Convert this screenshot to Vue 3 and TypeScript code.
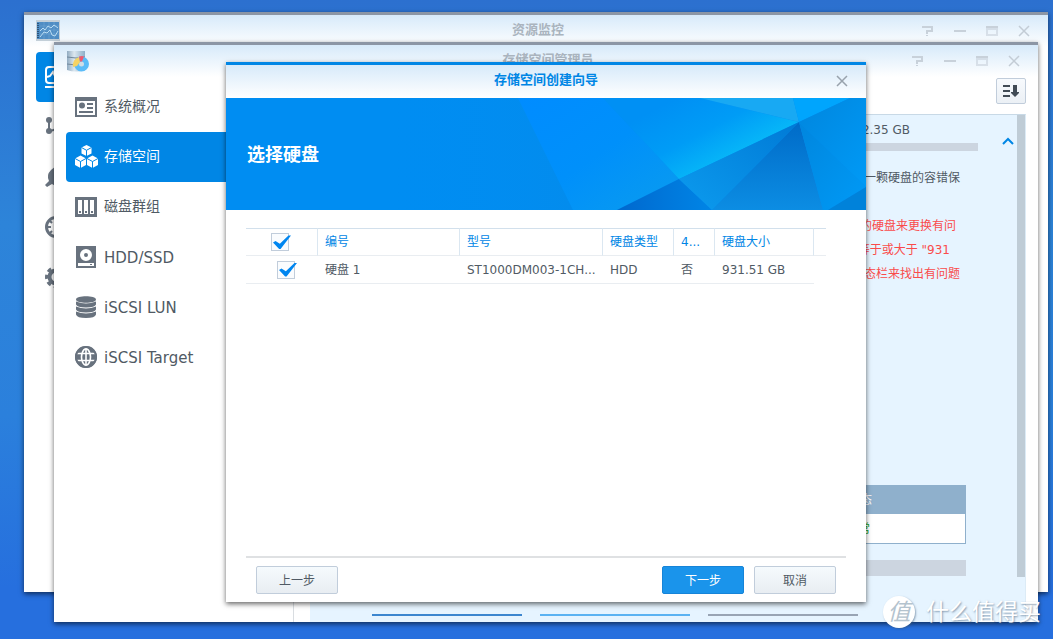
<script setup lang="ts">
import { ref, computed } from 'vue'

interface NavItem {
  icon: string
  label: string
  latin?: boolean
}

interface Disk {
  name: string
  model: string
  type: string
  native: string
  size: string
  checked: boolean
}

const monitorNav: string[] = ['chart', 'nodes', 'plug', 'clock', 'gear']
const monitorLabels: string[] = ['性能', '连接', '服务', '速度', '设置']

const storageNav: NavItem[] = [
  { icon: 'overview', label: '系统概况' },
  { icon: 'cubes', label: '存储空间' },
  { icon: 'group', label: '磁盘群组' },
  { icon: 'hdd', label: 'HDD/SSD', latin: true },
  { icon: 'lun', label: 'iSCSI LUN', latin: true },
  { icon: 'globe', label: 'iSCSI Target', latin: true },
]
const active = ref('存储空间')

const disks = ref<Disk[]>([
  { name: '硬盘 1', model: 'ST1000DM003-1CH...', type: 'HDD', native: '否', size: '931.51 GB', checked: true },
])

const allChecked = computed<boolean>({
  get: () => disks.value.every((d) => d.checked),
  set: (v) => disks.value.forEach((d) => (d.checked = v)),
})
</script>

<template>
  <div class="desktop">
    <section class="window monitor" aria-label="资源监控">
      <header class="titlebar">
        <svg class="app-icon" viewBox="0 0 24 24" aria-hidden="true">
          <rect x="0" y="0" width="24" height="21" fill="#c3cfd8" />
          <rect x="1" y="2" width="22" height="17" fill="#4f8dc4" />
          <path d="M2 3v15" stroke="#2d557c" stroke-width="2" stroke-dasharray="1 1" />
          <path d="M4 6h19M4 10h19M4 14h19M8 2v17M13 2v17M18 2v17" stroke="#75a9d5" stroke-width="0.5" />
          <path d="M4 11l3-3 2 2 3-4 3 2 3-3 4 3M4 17l4-5 3 1 3-3 2 5 3 1 3-5" fill="none" stroke="#b9dcf2" />
        </svg>
        <h2>资源监控</h2>
        <div class="controls">
          <button type="button" aria-label="帮助"><svg viewBox="0 0 12 12"><path d="M0 1h11v6H6v2H4V5h5V3H0zM4 10h2v1H4z" /></svg></button>
          <button type="button" aria-label="最小化"><svg viewBox="0 0 12 12"><path d="M0 5h12v2H0z" /></svg></button>
          <button type="button" aria-label="最大化"><svg viewBox="0 0 12 12"><path d="M0 1h12v10H0zM2 5v4h8V5z" opacity="0.6" /><path d="M0 1h12v2H0z" /></svg></button>
          <button type="button" aria-label="关闭"><svg viewBox="0 0 12 12"><path class="cross" d="M1 1l10 10M11 1L1 11" /></svg></button>
        </div>
      </header>
      <nav class="sidebar">
        <button v-for="(icon, i) in monitorNav" :key="icon" type="button" class="nav-item" :class="{ active: i === 0 }" :aria-label="monitorLabels[i]">
          <svg class="nav-icon" viewBox="0 0 22 22" fill="currentColor" aria-hidden="true">
            <template v-if="icon === 'chart'">
              <rect x="1" y="1" width="20" height="16" rx="3" fill="none" stroke="currentColor" stroke-width="2" />
              <path d="M2 11l3-1 3-4 3 6 4-5 5 3" fill="none" stroke="currentColor" stroke-width="2" />
              <path d="M0 20h22v2H0z" />
            </template>
            <template v-else-if="icon === 'nodes'">
              <circle cx="4" cy="4" r="3" /><circle cx="4" cy="15" r="3" /><circle cx="18" cy="8" r="3" />
              <path d="M4 4v11M4 15q8-1 14-7" fill="none" stroke="currentColor" stroke-width="2" />
            </template>
            <template v-else-if="icon === 'plug'">
              <path d="M0 19l4-4Q1 9 6 4l5-4 10 12-3 6q-6 4-11 0l-5 3z" />
            </template>
            <template v-else-if="icon === 'clock'">
              <circle cx="11" cy="11" r="9.500" fill="#fff" stroke="currentColor" stroke-width="3" />
              <path d="M3 11h3M5 5l2 2M11 3v3M5 17l2-2M11 11l5-5" stroke="currentColor" stroke-width="2" />
            </template>
            <template v-else>
              <circle cx="11" cy="11" r="6.500" fill="none" stroke="currentColor" stroke-width="4" />
              <circle cx="11" cy="11" r="9" fill="none" stroke="currentColor" stroke-width="4" stroke-dasharray="4 3.070" stroke-dashoffset="2" />
            </template>
          </svg>
        </button>
      </nav>
    </section>

    <section class="window storage" aria-label="存储空间管理员">
      <header class="titlebar">
        <svg class="app-icon" viewBox="0 0 24 24" aria-hidden="true">
          <defs>
            <linearGradient id="drum" x1="0" x2="1" y1="0" y2="0">
              <stop offset="0" stop-color="#91abc1" /><stop offset="0.4" stop-color="#dce7ef" /><stop offset="1" stop-color="#8dafc9" />
            </linearGradient>
          </defs>
          <path d="M1 1h18v19q-9 3-18 0z" fill="url(#drum)" />
          <path d="M1 7q9 2 18 0M1 14q9 2 18 0" fill="none" stroke="#71889c" />
          <circle cx="15.500" cy="14" r="5" fill="#cfdde6" stroke="#5bbcf8" stroke-width="5" />
          <path d="M7 17a8.500 8.500 0 0 1 6-10l1 5-3 4z" fill="#f5d364" />
          <path d="M13 6.500q3-1 5 0l-2 5h-2z" fill="#ee5a70" />
        </svg>
        <h2>存储空间管理员</h2>
        <div class="controls">
          <button type="button" aria-label="帮助"><svg viewBox="0 0 12 12"><path d="M0 1h11v6H6v2H4V5h5V3H0zM4 10h2v1H4z" /></svg></button>
          <button type="button" aria-label="最小化"><svg viewBox="0 0 12 12"><path d="M0 5h12v2H0z" /></svg></button>
          <button type="button" aria-label="最大化"><svg viewBox="0 0 12 12"><path d="M0 1h12v10H0zM2 5v4h8V5z" opacity="0.6" /><path d="M0 1h12v2H0z" /></svg></button>
          <button type="button" aria-label="关闭"><svg viewBox="0 0 12 12"><path class="cross" d="M1 1l10 10M11 1L1 11" /></svg></button>
        </div>
      </header>

      <div class="body">
        <nav class="sidebar ruled">
          <button v-for="item in storageNav" :key="item.label" type="button" class="nav-item" :class="{ active: item.label === active, latin: item.latin }" @click="active = item.label">
            <svg class="nav-icon" viewBox="0 0 22 22" fill="currentColor" fill-rule="evenodd" aria-hidden="true">
              <path v-if="item.icon === 'overview'" d="M0 1h22v20H0zM2 5v14h18V5zM7 6.500a3 3 0 1 1 0 6 3 3 0 0 1 0-6zM12 7h6v2h-6zM12 11h6v2h-6zM4 15h14v2H4z" />
              <template v-else-if="item.icon === 'cubes'">
                <path d="M11.500-1l5 2.500v6l-5 2.500-5-2.500v-6zM5.500 9.500l5.500 3v6.500l-5.500 3-5.500-3v-6.500zM17.500 9.500l5.500 3v6.500l-5.500 3-5.500-3v-6.500z" />
                <path d="M6.500 1.500l5 2.800 5-2.800M11.500 4.300V10M0 12.500l5.500 3 5.500-3M5.500 15.500V22M12 12.500l5.500 3 5.500-3M17.500 15.500V22" fill="none" stroke="#0086e5" />
              </template>
              <path v-else-if="item.icon === 'group'" d="M0 1h22v20H0zM3 4v14h4V4zM9 4v14h4V4zM15 4v14h4V4zM4 15h2v2H4zM10 15h2v2h-2zM16 15h2v2h-2z" />
              <path v-else-if="item.icon === 'hdd'" d="M1 0h20v22H1zM11 3a6 6 0 1 0 0 12 6 6 0 0 0 0-12zM11 7a2 2 0 1 1 0 4 2 2 0 0 1 0-4zM3 17v3h16v-3zM15 18h2v1h-2z" />
              <path v-else-if="item.icon === 'lun'" d="M1 3.500C1-.8 21-.8 21 3.500S1 7.800 1 3.500zM1 5.500q10 4 20 0v3q-1 3-10 3t-10-3zM1 10.500q10 4 20 0v3q-1 3-10 3t-10-3zM1 15.500q10 4 20 0v3q-1 3.500-10 3.500t-10-3.500z" />
              <template v-else>
                <circle cx="11" cy="11" r="11" />
                <path d="M2 7.500h18M2 14.500h18M11 2v18M11 2c-6 4-6 14 0 18M11 2c6 4 6 14 0 18" fill="none" stroke="#fff" stroke-width="1.600" />
                <circle cx="11" cy="11" r="10" fill="none" stroke="currentColor" stroke-width="2" />
              </template>
            </svg>
            <span>{{ item.label }}</span>
          </button>
        </nav>

        <main class="main">
          <button type="button" class="sort" aria-label="排序">
            <svg viewBox="0 0 18 14" aria-hidden="true"><path d="M1 1h7v2H1zM1 6h7v2H1zM1 11h7v2H1zM11 1h4v7h2v1l-4 4-4-4V8h2z" fill="#414b55" /></svg>
          </button>
          <div class="panel">
            <div class="details">
              <div class="head">
                <div class="summary">
                  <p class="capacity">2.35 GB</p>
                  <div class="bar thin"></div>
                </div>
                <button type="button" class="collapse" aria-label="收起">
                  <svg viewBox="0 0 14 10" aria-hidden="true"><path d="M2 8l5-5 5 5" fill="none" stroke="#0086e5" stroke-width="2" /></svg>
                </button>
              </div>
              <p class="note">一颗硬盘的容错保</p>
              <div class="warning">
                <p class="indent">的硬盘来更换有问</p>
                <p class="indent-wide">等于或大于 "931</p>
                <p>态栏来找出有问题</p>
              </div>
              <table class="status">
                <thead><tr><th>状态</th></tr></thead>
                <tbody><tr><td>正常</td></tr></tbody>
              </table>
              <div class="bar thick"></div>
              <div class="legend"><i class="deep"></i><i class="light"></i><i class="grey"></i></div>
            </div>
            <div class="scroll-thumb"></div>
          </div>
        </main>
      </div>

      <div class="dialog" role="dialog" aria-labelledby="wizard-title">
        <header class="dialog-title">
          <h2 id="wizard-title">存储空间创建向导</h2>
          <button type="button" aria-label="关闭"><svg viewBox="0 0 12 12"><path d="M1 1l10 10M11 1L1 11" /></svg></button>
        </header>

        <div class="banner">
          <svg class="facets" viewBox="0 0 640 112" preserveAspectRatio="none" aria-hidden="true">
            <defs>
              <linearGradient id="f-left" x1="0" x2="1" y1="0" y2="1"><stop offset="0" stop-color="#008cff" /><stop offset="0.5" stop-color="#0090fa" /><stop offset="1" stop-color="#0a9cee" /></linearGradient>
              <linearGradient id="f-glow" gradientUnits="userSpaceOnUse" x1="450" y1="0" x2="490" y2="76"><stop offset="0" stop-color="#0090f4" /><stop offset="0.5" stop-color="#009cf6" /><stop offset="1" stop-color="#08bcf8" /></linearGradient>
              <linearGradient id="f-low" x1="0" x2="1" y1="1" y2="0"><stop offset="0" stop-color="#0c9bee" /><stop offset="1" stop-color="#007ad6" /></linearGradient>
              <linearGradient id="f-deep" x1="0" x2="0" y1="0" y2="1"><stop offset="0" stop-color="#006bc8" /><stop offset="1" stop-color="#0c8de3" /></linearGradient>
              <linearGradient id="f-dark" x1="0" x2="1" y1="0" y2="0"><stop offset="0" stop-color="#0068ce" /><stop offset="1" stop-color="#0085e6" /></linearGradient>
              <linearGradient id="f-right" x1="0" x2="1" y1="0" y2="1"><stop offset="0" stop-color="#0086de" /><stop offset="1" stop-color="#009af6" /></linearGradient>
              <linearGradient id="f-wedge" x1="0" x2="1" y1="0" y2="0"><stop offset="0" stop-color="#008df2" stop-opacity="0" /><stop offset="1" stop-color="#038ced" /></linearGradient>
            </defs>
            <rect width="640" height="112" fill="#008df2" />
            <path d="M150 0H292L347 112H150z" fill="url(#f-wedge)" />
            <path d="M292 0H377L453 81 391 112H347z" fill="url(#f-left)" />
            <path d="M377 0H474L573 24 453 81z" fill="url(#f-glow)" />
            <path d="M474 0H567L573 24z" fill="#18a9f3" />
            <path d="M567 0H624L573 24z" fill="#00a5fd" />
            <path d="M624 0H640V89L573 24z" fill="url(#f-right)" />
            <path d="M453 81L486 112H391z" fill="url(#f-dark)" />
            <path d="M453 81L573 24 486 112z" fill="url(#f-low)" />
            <path d="M573 24L597 112H486z" fill="url(#f-deep)" />
            <path d="M573 24L640 89 602 112H597z" fill="url(#f-right)" />
            <path d="M640 89V112H602z" fill="#0082da" />
          </svg>
          <h1>选择硬盘</h1>
        </div>

        <div class="dialog-body">
          <table class="disks">
            <colgroup>
              <col class="c-check" /><col class="c-name" /><col class="c-model" /><col class="c-type" /><col class="c-native" /><col class="c-size" /><col class="c-end" />
            </colgroup>
            <thead>
              <tr>
                <th><input v-model="allChecked" type="checkbox" aria-label="全选" /></th>
                <th>编号</th>
                <th>型号</th>
                <th>硬盘类型</th>
                <th>4...</th>
                <th>硬盘大小</th>
                <th></th>
              </tr>
            </thead>
            <tbody>
              <tr v-for="disk in disks" :key="disk.name">
                <td class="pick"><input v-model="disk.checked" type="checkbox" :aria-label="disk.name" /></td>
                <td>{{ disk.name }}</td>
                <td>{{ disk.model }}</td>
                <td>{{ disk.type }}</td>
                <td>{{ disk.native }}</td>
                <td>{{ disk.size }}</td>
              </tr>
            </tbody>
          </table>
        </div>

        <footer class="actions">
          <button type="button" class="btn">上一步</button>
          <span class="spacer"></span>
          <button type="button" class="btn primary">下一步</button>
          <button type="button" class="btn">取消</button>
        </footer>
      </div>
    </section>

    <div class="watermark"><span class="seal">值</span><span>什么值得买</span></div>
  </div>
</template>

<style>
body {
  margin: 0;
}
</style>

<style scoped>
.desktop {
  position: relative;
  height: 100vh;
  overflow: hidden;
  background: linear-gradient(#2c70cf 0%, #2d84d9 35%, #2b80dc 65%, #266fde 92%, #266fde 100%);
  font-family: "DejaVu Sans", "Noto Sans CJK SC", sans-serif;
  font-size: 12px;
  line-height: 16px;
  color: #505a64;
}
h1,
h2,
p {
  margin: 0;
}
button {
  font: inherit;
  color: inherit;
  border: 0;
  padding: 0;
  background: none;
}
svg {
  display: block;
}

.window {
  position: absolute;
  display: flex;
  flex-direction: column;
  box-sizing: border-box;
  border-top: 3px solid #8c96a5;
  background: linear-gradient(#d7eafa, #fff 32px);
  box-shadow: 0 2px 5px rgba(0, 0, 0, 0.6);
}
.monitor {
  left: 24px;
  right: 5px;
  top: 12px;
  bottom: 47px;
}
.storage {
  left: 54px;
  right: 15px;
  top: 42px;
  bottom: 17px;
}
.titlebar {
  display: grid;
  grid-template-columns: 1fr auto 1fr;
  align-items: start;
  flex: none;
  height: 33px;
  padding: 0 8px 0 12px;
}
.app-icon {
  width: 24px;
  height: 24px;
  margin-top: 5px;
}
.titlebar h2,
.dialog-title h2 {
  font-size: 13px;
  line-height: 30px;
  font-weight: 700;
}
.titlebar h2 {
  color: #aab4be;
}
.controls {
  display: flex;
  justify-content: flex-end;
}
.controls button {
  display: flex;
  align-items: center;
  justify-content: center;
  width: 32px;
  height: 32px;
}
.controls svg {
  width: 12px;
  height: 12px;
  fill: #c8d1da;
  fill-rule: evenodd;
}
.cross {
  stroke: #c3ccd5;
  stroke-width: 1.5;
}

.sidebar {
  display: flex;
  flex-direction: column;
  box-sizing: border-box;
  flex: none;
  width: 240px;
  padding: 4px 0 0 12px;
}
.ruled {
  border-right: 1px solid #d9dde1;
}
.nav-item {
  display: flex;
  align-items: center;
  gap: 7px;
  height: 50px;
  padding-left: 9px;
  border-radius: 4px 0 0 4px;
  font-size: 14px;
  line-height: 20px;
}
.nav-item span {
  padding-bottom: 2px;
}
.nav-item.latin {
  font-size: 15px;
}
.nav-item.latin span {
  padding: 2px 0 0;
}
.nav-icon {
  width: 22px;
  height: 22px;
  color: #68727e;
  overflow: visible;
}
.nav-item.active,
.nav-item.active .nav-icon {
  color: #fff;
}
.nav-item.active {
  background: #0086e5;
}

.body {
  display: flex;
  flex: 1;
  min-height: 0;
}
.main {
  display: flex;
  flex-direction: column;
  flex: 1;
  min-width: 0;
  padding: 0 12px 0 16px;
}
.sort {
  display: flex;
  align-items: center;
  justify-content: center;
  align-self: flex-end;
  flex: none;
  box-sizing: border-box;
  width: 30px;
  height: 26px;
  margin-bottom: 10px;
  border: 1px solid #c1cddb;
  border-radius: 2px;
  background: linear-gradient(#f7fafd, #ebf0f5);
}
.sort svg {
  width: 18px;
  height: 14px;
}
.panel {
  display: flex;
  flex: 1;
  min-height: 0;
  overflow: hidden;
  border-top: 1px solid #c8d9e6;
  border-right: 1px solid #dcebf6;
  background: #e6f4ff;
}
.details {
  display: flex;
  flex-direction: column;
  flex: 1;
  min-width: 0;
  text-align: right;
}
.scroll-thumb {
  flex: none;
  width: 8px;
  margin-bottom: 45px;
  background: #bfccd6;
}
.head {
  display: flex;
  align-items: center;
  padding: 7px 2px 0 40px;
}
.summary {
  flex: 1;
}
.capacity {
  padding-right: 68px;
}
.bar {
  background: #ccd5e0;
}
.thin {
  height: 8px;
  margin-top: 5px;
}
.thick {
  flex: none;
  height: 16px;
  margin: 16px 51px 0 40px;
}
.collapse {
  width: 14px;
  margin: 8px 0 0 23px;
}
.collapse svg {
  width: 14px;
  height: 10px;
}
.note,
.warning {
  padding-right: 57px;
  line-height: 24px;
}
.note {
  margin: 15px 0 24px;
}
.warning {
  color: #fa4b4b;
}
.indent {
  padding-right: 4px;
}
.indent-wide {
  padding-right: 10px;
}
.status {
  width: calc(100% - 91px);
  margin: 199px 51px 0 40px;
  border-collapse: separate;
  border-spacing: 0;
  border: 1px solid #8fb0cc;
  background: #fff;
}
.status th,
.status td {
  height: 28px;
  padding: 0 93px 0 0;
  text-align: right;
  font-weight: 400;
}
.status th {
  background: #8fb0cc;
  color: #fff;
}
.status td {
  height: 29px;
  padding-right: 95px;
  color: #14a01e;
}
.legend {
  display: flex;
  gap: 18px;
  margin-top: auto;
  padding: 0 0 6px 62px;
}
.legend i {
  width: 150px;
  height: 2px;
}
.deep {
  background: #3c86cf;
}
.light {
  background: #5ab2f2;
}
.grey {
  background: #98a4b4;
}

.dialog {
  position: absolute;
  top: 17px;
  bottom: 20px;
  left: 0;
  right: 0;
  display: flex;
  flex-direction: column;
  box-sizing: border-box;
  width: min(640px, 100%);
  margin: 0 auto;
  border-top: 3px solid #0086e5;
  background: #fff;
  box-shadow: 0 2px 5px rgba(0, 0, 0, 0.6);
}
.dialog-title {
  display: grid;
  grid-template-columns: 1fr auto 1fr;
  align-items: start;
  flex: none;
  height: 33px;
  padding: 0 8px;
  background: linear-gradient(#d7eafa, #fff);
}
.dialog-title h2 {
  grid-column: 2;
  color: #0086e5;
}
.dialog-title button {
  display: flex;
  align-items: center;
  justify-content: center;
  justify-self: end;
  width: 32px;
  height: 32px;
}
.dialog-title svg {
  width: 12px;
  height: 12px;
  stroke: #98a2ac;
  stroke-width: 1.5;
}
.banner {
  display: grid;
  align-items: center;
  flex: none;
  height: 112px;
}
.banner > * {
  grid-area: 1 / 1;
}
.facets {
  width: 100%;
  height: 112px;
}
.banner h1 {
  z-index: 1;
  padding: 2px 0 0 21px;
  font-size: 18px;
  line-height: 24px;
  color: #fff;
}
.dialog-body {
  flex: 1;
  min-height: 0;
  margin: 0 20px;
  padding-top: 18px;
  border-bottom: 2px solid #dfe1e3;
}
.disks {
  width: calc(100% - 20px);
  table-layout: fixed;
  border-collapse: separate;
  border-spacing: 0;
}
.c-check {
  width: 72px;
}
.c-name {
  width: 142px;
}
.c-model {
  width: 143px;
}
.c-type {
  width: 71px;
}
.c-native {
  width: 41px;
}
.c-size {
  width: 99px;
}
.disks th,
.disks td {
  box-sizing: border-box;
  height: 28px;
  padding: 0 0 0 7px;
  border-bottom: 1px solid #e9edf1;
  text-align: left;
  font-weight: 400;
  white-space: nowrap;
}
.disks th {
  border-top: 1px solid #d2e0ec;
  border-right: 1px solid #dbe7f1;
  color: #0086e5;
}
.disks th:last-child {
  border-right: 0;
}
.disks th:first-child {
  padding-left: 25px;
}
.disks .pick {
  padding-left: 31px;
}
.disks input {
  display: block;
  position: relative;
  appearance: none;
  box-sizing: border-box;
  width: 18px;
  height: 18px;
  margin: 0;
  border: 1px solid #c1cddb;
  background: #fafcfe;
}
.disks input:checked::after {
  content: "";
  position: absolute;
  left: 1px;
  top: 1px;
  width: 18px;
  height: 14px;
  background: #0086f0;
  clip-path: polygon(0 54%, 14% 42%, 38% 62%, 86% 4%, 100% 4%, 42% 100%, 34% 100%);
}

.actions {
  display: flex;
  flex: none;
  gap: 10px;
  padding: 8px 30px;
}
.spacer {
  flex: 1;
}
.btn {
  box-sizing: border-box;
  width: 82px;
  height: 28px;
  padding-top: 1px;
  border: 1px solid #c1cddb;
  border-radius: 2px;
  background: linear-gradient(#f5fafd, #e8edf2);
}
.btn.primary {
  border-color: #1684d8;
  background: #1a94eb;
  color: #fff;
}

.watermark {
  position: absolute;
  right: 12px;
  bottom: 11px;
  display: flex;
  align-items: center;
  gap: 11px;
  font-size: 23px;
  line-height: 32px;
  color: #fff;
  text-shadow: 1px 1px 2px rgba(60, 90, 120, 0.6);
}
.seal {
  width: 32px;
  height: 32px;
  border-radius: 50%;
  background: #fff;
  box-shadow: 1px 1px 2px rgba(60, 90, 120, 0.5);
  color: #b4c3ce;
  font-style: italic;
  text-align: center;
  text-shadow: none;
}
</style>
